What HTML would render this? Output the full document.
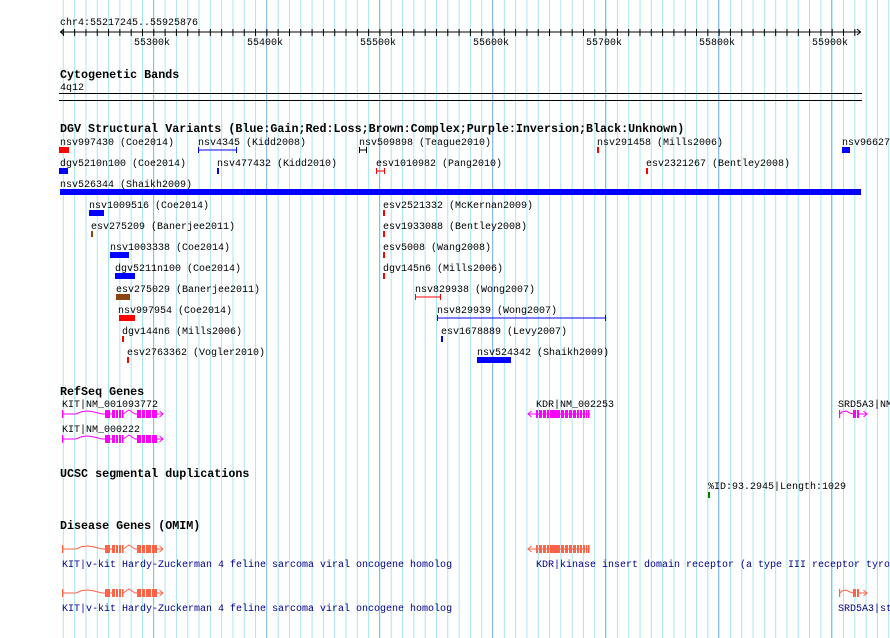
<!DOCTYPE html>
<html><head><meta charset="utf-8"><style>
html,body{margin:0;padding:0;background:#fff;}
svg{display:block;}
text{font-family:"Liberation Mono",monospace;font-size:10px;fill:#000;}
.b{font-weight:bold;font-size:11.7px;}
.o{fill:#00008b;}
</style></head><body>
<svg width="890" height="638" viewBox="0 0 890 638" xmlns="http://www.w3.org/2000/svg">
<defs>
<pattern id="g" patternUnits="userSpaceOnUse" x="6.3" y="0" width="11.307" height="638"><rect x="0" y="0" width="1" height="638" fill="#a8e6ee"/></pattern>
<pattern id="t" patternUnits="userSpaceOnUse" x="6.3" y="29" width="11.307" height="7"><rect x="0" y="0" width="1" height="7" fill="#000"/></pattern>
<g id="kit">
<rect x="0" y="-4" width="1.2" height="8"/>
<polyline points="0,0 14,0 20,-2.5 26,-3 32,-2 40,0 50,0" fill="none" stroke="currentColor" stroke-width="1"/>
<rect x="43" y="-4" width="5" height="8"/><rect x="50" y="-4" width="3" height="8"/><rect x="54" y="-4" width="2" height="8"/><rect x="57" y="-4" width="2" height="8"/><rect x="60" y="-4" width="1.5" height="8"/>
<polyline points="61,0 67,-4 73,0 76,0" fill="none" stroke="currentColor" stroke-width="1"/>
<rect x="75" y="-4" width="4" height="8"/><rect x="80" y="-4" width="3" height="8"/><rect x="84" y="-4" width="5" height="8"/><rect x="90" y="-4" width="5" height="8"/>
<line x1="95" y1="0" x2="101" y2="0" stroke="currentColor"/>
<polyline points="97.5,-3 101,0 97.5,3" fill="none" stroke="currentColor"/>
</g>
<g id="kdr">
<line x1="0" y1="0" x2="8" y2="0" stroke="currentColor"/>
<polyline points="3.5,-3 0,0 3.5,3" fill="none" stroke="currentColor"/>
<rect x="8" y="-4" width="2" height="8"/><rect x="11" y="-4" width="3" height="8"/><rect x="15" y="-4" width="3" height="8"/><rect x="19" y="-4" width="2" height="8"/><rect x="22" y="-4" width="10" height="8"/><rect x="33" y="-4" width="3" height="8"/><rect x="37" y="-4" width="3" height="8"/><rect x="41" y="-4" width="3" height="8"/><rect x="45" y="-4" width="3" height="8"/><rect x="49" y="-4" width="2" height="8"/><rect x="52" y="-4" width="2" height="8"/><rect x="55" y="-4" width="2" height="8"/><rect x="58" y="-4" width="1.5" height="8"/><rect x="60" y="-4" width="1.5" height="8"/>
<line x1="8" y1="0" x2="62" y2="0" stroke="currentColor"/>
</g>
<g id="srd">
<rect x="0" y="-4" width="1.2" height="8"/>
<polyline points="1,0 3,-2 7,-3 11,-1 14,0" fill="none" stroke="currentColor"/>
<rect x="14" y="-4" width="3" height="8"/><rect x="18" y="-4" width="2" height="8"/>
<line x1="20" y1="0" x2="28" y2="0" stroke="currentColor"/>
<polyline points="24.5,-3 28,0 24.5,3" fill="none" stroke="currentColor"/>
</g>
</defs>
<rect x="59" y="0" width="831" height="638" fill="url(#g)"/>
<g fill="#8cbce8">
<rect x="153" y="0" width="1" height="638"/><rect x="266" y="0" width="1" height="638"/><rect x="379" y="0" width="1" height="638"/><rect x="492" y="0" width="1" height="638"/><rect x="605" y="0" width="1" height="638"/><rect x="718" y="0" width="1" height="638"/><rect x="831" y="0" width="1" height="638"/>
</g>
<!-- ruler -->
<text x="60" y="25">chr4:55217245..55925876</text>
<rect x="60" y="31.5" width="801" height="1" fill="#000"/>
<rect x="62" y="29" width="797" height="7" fill="url(#t)"/>
<polyline points="64,29 60.5,32 64,35" fill="none" stroke="#000"/>
<polyline points="857,29 860.5,32 857,35" fill="none" stroke="#000"/>
<text x="134" y="45">55300k</text><text x="247" y="45">55400k</text><text x="360" y="45">55500k</text><text x="473" y="45">55600k</text><text x="586" y="45">55700k</text><text x="699" y="45">55800k</text><text x="812" y="45">55900k</text>
<!-- cyto -->
<text class="b" x="60" y="78">Cytogenetic Bands</text>
<text x="60" y="90">4q12</text>
<rect x="59" y="93" width="803" height="1" fill="#000"/>
<rect x="59" y="100" width="803" height="1" fill="#000"/>
<!-- DGV -->
<text class="b" x="60" y="132">DGV Structural Variants (Blue:Gain;Red:Loss;Brown:Complex;Purple:Inversion;Black:Unknown)</text>
<text x="60" y="145">nsv997430 (Coe2014)</text>
<text x="198" y="145">nsv4345 (Kidd2008)</text>
<text x="359" y="145">nsv509898 (Teague2010)</text>
<text x="597" y="145">nsv291458 (Mills2006)</text>
<text x="842" y="145">nsv96627</text>
<rect x="59" y="147" width="10" height="6" fill="#f00"/>
<g stroke="#00f"><line x1="198" y1="150" x2="237" y2="150"/><line x1="198.5" y1="147" x2="198.5" y2="153"/><line x1="236.5" y1="147" x2="236.5" y2="153"/></g>
<g stroke="#000"><line x1="359" y1="150" x2="367" y2="150"/><line x1="359.5" y1="147" x2="359.5" y2="153"/><line x1="366.5" y1="147" x2="366.5" y2="153"/></g>
<rect x="597" y="147" width="2" height="6" fill="#f00"/>
<rect x="842" y="147" width="8" height="6" fill="#00f"/>
<text x="60" y="166">dgv5210n100 (Coe2014)</text>
<text x="217" y="166">nsv477432 (Kidd2010)</text>
<text x="376" y="166">esv1010982 (Pang2010)</text>
<text x="646" y="166">esv2321267 (Bentley2008)</text>
<rect x="59" y="168" width="9" height="6" fill="#00f"/>
<rect x="217" y="168" width="2" height="6" fill="#00f"/>
<g stroke="#f00"><line x1="376" y1="171" x2="385" y2="171"/><line x1="376.5" y1="168" x2="376.5" y2="174"/><line x1="384.5" y1="168" x2="384.5" y2="174"/></g>
<rect x="646" y="168" width="2" height="6" fill="#f00"/>
<text x="60" y="187">nsv526344 (Shaikh2009)</text>
<rect x="60" y="189" width="801" height="6" fill="#00f"/>
<text x="89" y="208">nsv1009516 (Coe2014)</text>
<text x="383" y="208">esv2521332 (McKernan2009)</text>
<rect x="89" y="210" width="15" height="6" fill="#00f"/>
<rect x="383" y="210" width="2" height="6" fill="#f00"/>
<text x="91" y="229">esv275209 (Banerjee2011)</text>
<text x="383" y="229">esv1933088 (Bentley2008)</text>
<rect x="91" y="231" width="2" height="6" fill="#8b4513"/>
<rect x="383" y="231" width="2" height="6" fill="#f00"/>
<text x="110" y="250">nsv1003338 (Coe2014)</text>
<text x="383" y="250">esv5008 (Wang2008)</text>
<rect x="110" y="252" width="19" height="6" fill="#00f"/>
<rect x="383" y="252" width="2" height="6" fill="#f00"/>
<text x="115" y="271">dgv5211n100 (Coe2014)</text>
<text x="383" y="271">dgv145n6 (Mills2006)</text>
<rect x="115" y="273" width="20" height="6" fill="#00f"/>
<rect x="383" y="273" width="2" height="6" fill="#f00"/>
<text x="116" y="292">esv275029 (Banerjee2011)</text>
<text x="415" y="292">nsv829938 (Wong2007)</text>
<rect x="116" y="294" width="14" height="6" fill="#8b4513"/>
<g stroke="#f00"><line x1="415" y1="297" x2="441" y2="297"/><line x1="415.5" y1="294" x2="415.5" y2="300"/><line x1="440.5" y1="294" x2="440.5" y2="300"/></g>
<text x="118" y="313">nsv997954 (Coe2014)</text>
<text x="437" y="313">nsv829939 (Wong2007)</text>
<rect x="119" y="315" width="16" height="6" fill="#f00"/>
<g stroke="#00f"><line x1="437" y1="318" x2="606" y2="318"/><line x1="437.5" y1="315" x2="437.5" y2="321"/><line x1="605.5" y1="315" x2="605.5" y2="321"/></g>
<text x="122" y="334">dgv144n6 (Mills2006)</text>
<text x="441" y="334">esv1678889 (Levy2007)</text>
<rect x="122" y="336" width="2" height="6" fill="#f00"/>
<rect x="441" y="336" width="2" height="6" fill="#00f"/>
<text x="127" y="355">esv2763362 (Vogler2010)</text>
<text x="477" y="355">nsv524342 (Shaikh2009)</text>
<rect x="127" y="357" width="2" height="6" fill="#f00"/>
<rect x="477" y="357" width="34" height="6" fill="#00f"/>
<!-- RefSeq -->
<text class="b" x="60" y="395">RefSeq Genes</text>
<text x="62" y="407">KIT|NM_001093772</text>
<text x="62" y="432">KIT|NM_000222</text>
<text x="536" y="407">KDR|NM_002253</text>
<text x="838" y="407">SRD5A3|NM_</text>
<use href="#kit" x="62" y="414" fill="#f0f" color="#f0f"/>
<use href="#kit" x="62" y="439" fill="#f0f" color="#f0f"/>
<use href="#kdr" x="528" y="414" fill="#f0f" color="#f0f"/>
<use href="#srd" x="839" y="414" fill="#f0f" color="#f0f"/>
<!-- UCSC -->
<text class="b" x="60" y="477">UCSC segmental duplications</text>
<text x="708" y="489">%ID:93.2945|Length:1029</text>
<rect x="708" y="492" width="2" height="6" fill="#008000"/>
<!-- OMIM -->
<text class="b" x="60" y="529">Disease Genes (OMIM)</text>
<use href="#kit" x="62" y="549" fill="#ff6347" color="#ff6347"/>
<use href="#kdr" x="528" y="549" fill="#ff6347" color="#ff6347"/>
<text class="o" x="62" y="567">KIT|v-kit Hardy-Zuckerman 4 feline sarcoma viral oncogene homolog</text>
<text class="o" x="536" y="567">KDR|kinase insert domain receptor (a type III receptor tyrosine kinase)</text>
<use href="#kit" x="62" y="593" fill="#ff6347" color="#ff6347"/>
<use href="#srd" x="839" y="593" fill="#ff6347" color="#ff6347"/>
<text class="o" x="62" y="611">KIT|v-kit Hardy-Zuckerman 4 feline sarcoma viral oncogene homolog</text>
<text class="o" x="838" y="611">SRD5A3|steroid</text>
</svg>
</body></html>
